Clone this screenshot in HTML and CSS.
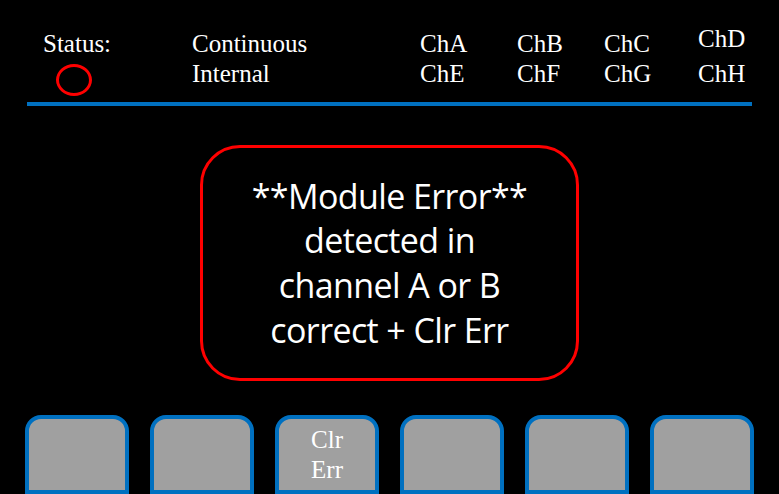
FILE: index.html
```html
<!DOCTYPE html>
<html>
<head>
<meta charset="utf-8">
<link rel="stylesheet" href="styles.css">
</head>
<body>
<div class="screen">
  <header class="header">
    <div class="col col-status">
      <div class="line">Status:</div>
      <div class="status-ring"></div>
    </div>
    <div class="col col-mode">
      <div class="line">Continuous</div>
      <div class="line">Internal</div>
    </div>
    <div class="col col-a">
      <div class="line">ChA</div>
      <div class="line">ChE</div>
    </div>
    <div class="col col-b">
      <div class="line">ChB</div>
      <div class="line">ChF</div>
    </div>
    <div class="col col-c">
      <div class="line">ChC</div>
      <div class="line">ChG</div>
    </div>
    <div class="col col-d">
      <div class="line raised">ChD</div>
      <div class="line lowered">ChH</div>
    </div>
  </header>
  <div class="rule"></div>
  <main class="body">
    <div class="error-box">
      <div class="error-text">**Module Error**<br>detected in<br>channel A or B<br>correct + Clr Err</div>
    </div>
  </main>
  <nav class="softkeys">
    <div class="key"></div>
    <div class="key"></div>
    <div class="key"><span class="key-label">Clr<br>Err</span></div>
    <div class="key"></div>
    <div class="key"></div>
    <div class="key"></div>
  </nav>
</div>
</body>
</html>
```
FILE: styles.css
```css
html, body {
  margin: 0;
  padding: 0;
  background: #000;
}
.screen {
  width: 779px;
  height: 494px;
  overflow: hidden;
  background: #000;
  color: #fff;
  font-family: "Liberation Serif", "Times New Roman", serif;
}
.header {
  display: flex;
  padding-top: 29px;
  height: 60px;
  font-size: 25px;
  line-height: 30px;
}
.line { white-space: nowrap; }
.col-status { margin-left: 43px; width: 149px; }
.col-mode { width: 228px; }
.col-a { width: 97px; }
.col-b { width: 87px; }
.col-c { width: 94px; }
.raised { margin-top: -5px; }
.lowered { margin-top: 5px; }
.status-ring {
  width: 30px;
  height: 26px;
  border: 3px solid #ff0000;
  border-radius: 50%;
  margin-top: 5px;
  margin-left: 13px;
}
.rule {
  margin: 13px 27px 0 27px;
  height: 4px;
  background: #0070c0;
}
.body {
  display: flex;
  justify-content: center;
  padding-top: 39px;
}
.error-box {
  box-sizing: border-box;
  width: 379px;
  height: 236px;
  border: 3px solid #ff0000;
  border-radius: 40px;
  display: flex;
  align-items: center;
  justify-content: center;
}
.error-text {
  font-family: "Open Sans", "Liberation Sans", sans-serif;
  font-size: 34px;
  letter-spacing: -0.6px;
  line-height: 44.7px;
  text-align: center;
  color: #fff;
}
.softkeys {
  display: flex;
  gap: 21px;
  padding-left: 25px;
  margin-top: 34px;
}
.key {
  box-sizing: border-box;
  width: 104px;
  height: 79px;
  background: #a0a0a0;
  border: 4px solid #0070c0;
  border-radius: 16px 16px 0 0;
  display: flex;
  justify-content: center;
}
.key-label {
  font-size: 25px;
  line-height: 30px;
  text-align: center;
  color: #fff;
  padding-top: 6px;
}
```
